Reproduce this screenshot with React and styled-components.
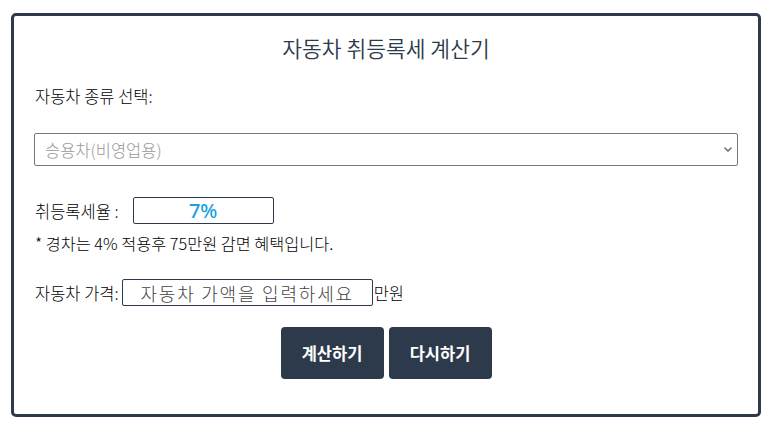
import React from "react";
import styled, { createGlobalStyle } from "styled-components";

const Global = createGlobalStyle`
  body {
    margin: 0;
    background: #ffffff;
    font-family: "Noto Sans CJK KR", "Noto Sans", sans-serif;
    color: #000;
  }
`;

const Page = styled.div`
  padding: 13px 8px 11px 11px;
`;

const Card = styled.div`
  width: 750px;
  box-sizing: border-box;
  border: 3px solid #2d3a4b;
  border-radius: 5px;
  padding: 20px 20px 35px 20px;
  display: flex;
  flex-direction: column;
`;

const Title = styled.h2`
  margin: 0;
  font-size: 21.5px;
  font-weight: 350;
  line-height: 24px;
  text-align: center;
  color: #2d3a4b;
`;

const Label = styled.div`
  margin-top: ${(p) => p.$mt}px;
  padding-left: 1px;
  font-size: 16.5px;
  line-height: 24px;
  font-weight: 300;
`;

const SelectWrap = styled.div`
  position: relative;
  margin-top: 25px;
`;

const Select = styled.select`
  appearance: none;
  width: 100%;
  height: 33px;
  box-sizing: border-box;
  border: 1px solid #767676;
  border-radius: 2px;
  background: #fff;
  padding: 0 10px;
  font-family: inherit;
  font-size: 16.5px;
  font-weight: 300;
  color: #999;
`;

const Chevron = styled.svg`
  position: absolute;
  right: 5px;
  top: 12px;
  pointer-events: none;
`;

const Row = styled.div`
  margin-top: ${(p) => p.$mt}px;
  display: flex;
  align-items: center;
  font-size: 16.5px;
  font-weight: 300;
  padding-left: 1px;
`;

const RateBox = styled.div`
  margin-left: 14px;
  width: 141px;
  height: 27px;
  box-sizing: border-box;
  border: 1px solid #2d3a4b;
  border-radius: 2px;
  display: flex;
  align-items: center;
  justify-content: center;
  color: #1a9fe0;
  font-family: "Noto Sans", "Liberation Sans", sans-serif;
  font-size: 20px;
  font-weight: 500;
`;

const Note = styled.div`
  margin-top: 9px;
  padding-left: 1px;
  font-size: 16.3px;
  font-weight: 300;
  line-height: 20px;
`;

const PriceInput = styled.input`
  width: 251px;
  height: 27px;
  box-sizing: border-box;
  border: 1px solid #2d3a4b;
  border-radius: 2px;
  margin: 0 1px 0 3px;
  padding: 0;
  text-align: center;
  font-family: inherit;
  font-size: 18px;
  font-weight: 300;
  letter-spacing: 1.8px;
  &::placeholder {
    color: #444;
  }
`;

const Buttons = styled.div`
  margin-top: 21px;
  display: flex;
  justify-content: center;
  gap: 5px;
`;

const Button = styled.button`
  width: 103px;
  height: 52px;
  border: none;
  border-radius: 4px;
  background: #2d3a4b;
  color: #fff;
  font-family: inherit;
  font-size: 16.5px;
  font-weight: 700;
  cursor: pointer;
`;

export default function App() {
  return (
    <>
      <Global />
      <Page>
        <Card>
          <Title>자동차 취등록세 계산기</Title>
          <Label $mt={24}>자동차 종류 선택:</Label>
          <SelectWrap>
            <Select defaultValue="a">
              <option value="a">승용차(비영업용)</option>
            </Select>
            <Chevron width="10" height="8" viewBox="0 0 10 8">
              <path d="M1.5 2.5 L5 6 L8.5 2.5" fill="none" stroke="#777" strokeWidth="1.6" />
            </Chevron>
          </SelectWrap>
          <Row $mt={31}>
            취등록세율 :<RateBox>7%</RateBox>
          </Row>
          <Note>* 경차는 4% 적용후 75만원 감면 혜택입니다.</Note>
          <Row $mt={26}>
            자동차 가격:<PriceInput placeholder="자동차 가액을 입력하세요" />만원
          </Row>
          <Buttons>
            <Button>계산하기</Button>
            <Button>다시하기</Button>
          </Buttons>
        </Card>
      </Page>
    </>
  );
}
